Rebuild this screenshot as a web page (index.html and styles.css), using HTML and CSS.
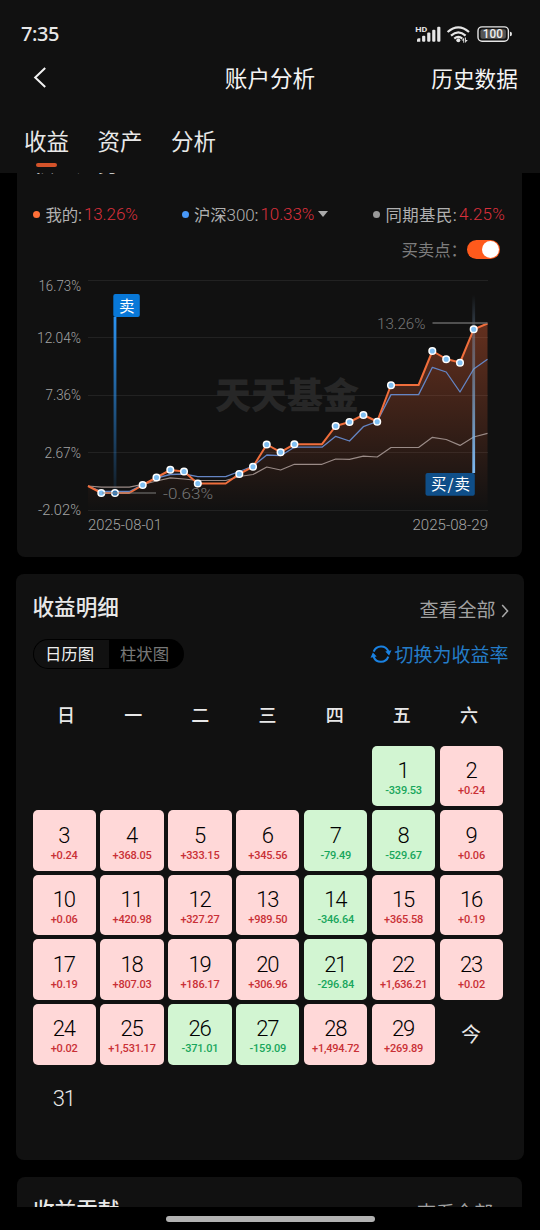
FILE: index.html
```html
<!DOCTYPE html>
<html lang="zh-CN">
<head>
<meta charset="utf-8">
<title>账户分析</title>
<link rel="stylesheet" href="styles.css">
</head>
<body>
<div class="app">
  <header class="header">
    <div class="status">
      <span class="clock">7:35</span>
      <svg class="status-icons" width="98" height="20" viewBox="415 24 98 20">
        <g fill="#e6e6e6">
          <text x="415.2" y="32" class="hd" textLength="12" lengthAdjust="spacingAndGlyphs">HD</text>
          <path d="M417 41.8v-2q0-1.6 1.6-1.6h1.7v3.6z"/>
          <rect x="422.1" y="35.8" width="3.2" height="6" rx="1"/>
          <rect x="427.2" y="32.6" width="3.2" height="9.2" rx="1"/>
          <rect x="432.2" y="29.7" width="3.2" height="12.1" rx="1"/>
          <rect x="437.2" y="26.8" width="3.2" height="15" rx="1"/>
          <circle cx="458.3" cy="40.2" r="2"/>
          <path d="M463.3 42.8v-2.4h-1.7l2.6-3v5.4zM465.1 37.6h.9v2.4h1.8l-2.7 3z"/>
        </g>
        <g fill="none" stroke="#e6e6e6" stroke-width="2.2">
          <path d="M447.6 32q10.7-9.4 21.4 0M451 35.6q7.3-6.4 14.6 0M454.3 38.6q4-3.4 8 0"/>
        </g>
        <rect x="478" y="26.9" width="30.4" height="14.3" rx="4" fill="none" stroke="#e6e6e6" stroke-width="1.4"/>
        <rect x="480.5" y="29.3" width="25.4" height="9.5" rx="2" fill="#555"/>
        <path d="M510 31.8q2 0 2 2.2t-2 2.2z" fill="#e6e6e6"/>
        <text x="482.8" y="38.3" class="battery" textLength="20" lengthAdjust="spacingAndGlyphs">100</text>
      </svg>
    </div>
    <div class="nav">
      <svg class="back" width="14" height="22" viewBox="0 0 14 22"><path d="M12.2 2.1L2.2 11.5l10 9.4" fill="none" stroke="#f2f2f2" stroke-width="2"/></svg>
      <h1 class="nav-title">账户分析</h1>
      <span class="nav-action">历史数据</span>
    </div>
    <nav class="tabs">
      <span class="tab active">收益</span><span class="tab">资产</span><span class="tab">分析</span>
    </nav>
  </header>

  <main class="scroll">
    <section class="card trend">
      <h2 class="card-title">权益走势</h2>
      <div class="legend">
        <div class="legend-item"><i class="dot orange"></i><span>我的:</span><b>13.26%</b></div>
        <div class="legend-item"><i class="dot blue"></i><span>沪深<em>300</em>:</span><b>10.33%</b><i class="caret"></i></div>
        <div class="legend-item"><i class="dot gray"></i><span>同期基民:</span><b>4.25%</b></div>
      </div>
      <div class="toggle-row"><span>买卖点：</span><i class="switch"></i></div>
      <svg class="chart" width="505" height="291" viewBox="17 266 505 291">
        <defs>
          <linearGradient id="area" x1="0" y1="323" x2="0" y2="510" gradientUnits="userSpaceOnUse">
            <stop offset="0" stop-color="#ff6a38" stop-opacity=".35"/>
            <stop offset="1" stop-color="#ff6a38" stop-opacity="0"/>
          </linearGradient>
          <linearGradient id="sell" x1="0" y1="317" x2="0" y2="490" gradientUnits="userSpaceOnUse">
            <stop offset="0" stop-color="#2b93f2"/>
            <stop offset="1" stop-color="#2b93f2" stop-opacity=".1"/>
          </linearGradient>
          <linearGradient id="buy" x1="0" y1="295" x2="0" y2="473" gradientUnits="userSpaceOnUse">
            <stop offset="0" stop-color="#7faede" stop-opacity="0"/>
            <stop offset=".2" stop-color="#7f9fc0" stop-opacity=".35"/>
            <stop offset="1" stop-color="#7db9f2"/>
          </linearGradient>
        </defs>
        <path d="M88 280.5H488M88 337.5H488M88 395.5H488M88 452.5H488M88 510.5H488" stroke="#222" fill="none"/>
        <text class="watermark" x="215" y="409" textLength="144" lengthAdjust="spacingAndGlyphs">天天基金</text>
        <g class="axis">
          <text x="38.5" y="291" textLength="42.5" lengthAdjust="spacingAndGlyphs">16.73%</text>
          <text x="37" y="342.5" textLength="44" lengthAdjust="spacingAndGlyphs">12.04%</text>
          <text x="45.5" y="400" textLength="35.5" lengthAdjust="spacingAndGlyphs">7.36%</text>
          <text x="44.5" y="457.5" textLength="36.5" lengthAdjust="spacingAndGlyphs">2.67%</text>
          <text x="38" y="515" textLength="43" lengthAdjust="spacingAndGlyphs">-2.02%</text>
          <text x="88" y="530" textLength="74" lengthAdjust="spacingAndGlyphs">2025-08-01</text>
          <text x="412.5" y="530" textLength="75.5" lengthAdjust="spacingAndGlyphs">2025-08-29</text>
        </g>
        <path fill="url(#area)" d="M88 486L101.5 493H129.3L142.8 485 156.5 477.5 170.3 470 184 471.5 197.8 483.5H225.7L239.3 474 253 466.7 266.8 444.5 280.6 452.2 294.4 444.2H322L335.7 426 349.5 422 363.3 415 377.2 421.5 391 385H418.6L432.4 351 446.2 359 460 362.5 473.7 329.3 487.5 323.5V510H88z"/>
        <rect x="113.6" y="317" width="2.8" height="173" fill="url(#sell)"/>
        <path class="line" stroke="#9a8b87" stroke-width="1.2" d="M88 486L101.5 487.2H129.3L142.8 484.3 156.5 481 170.3 477.8 184 479 197.8 480.5H225.7L239.3 476.5 253 474.5 266.8 467 280.6 470 294.4 464.3H322L335.7 459 349.5 459.3 363.3 456.2 377.2 457 391 447.5H418.6L432.4 437.3 446.2 439.5 460 445.4 473.7 437 487.5 433.3"/>
        <path class="line" stroke="#6485c4" stroke-width="1.3" d="M88 486L101.5 491.5H129.3L142.8 484.5 156.5 478 170.3 474.5 184 474 197.8 476.7H225.7L239.3 471.5 253 466 266.8 455 280.6 455.7 294.4 447.2H322L335.7 436.3 349.5 441 363.3 426.7 377.2 421.5 391 394.6H418.6L432.4 367.3 446.2 372 460 392 473.7 369 487.5 359.2"/>
        <path class="line" stroke="#f06e3c" stroke-width="2" d="M88 486L101.5 493H129.3L142.8 485 156.5 477.5 170.3 470 184 471.5 197.8 483.5H225.7L239.3 474 253 466.7 266.8 444.5 280.6 452.2 294.4 444.2H322L335.7 426 349.5 422 363.3 415 377.2 421.5 391 385H418.6L432.4 351 446.2 359 460 362.5 473.7 329.3 487.5 323.5"/>
        <rect x="472.3" y="295" width="2.8" height="178" fill="url(#buy)"/>
        <g fill="#80bff2" stroke="#fff" stroke-width="1.5">
          <circle cx="101.3" cy="493" r="3.3"/><circle cx="115" cy="493" r="3.3" fill="#2f75b5"/><circle cx="142.7" cy="485" r="3.3"/><circle cx="156.5" cy="477.5" r="3.3"/><circle cx="170.3" cy="469.8" r="3.3"/><circle cx="184" cy="471.5" r="3.3"/><circle cx="197.8" cy="483.5" r="3.3"/><circle cx="239.3" cy="474" r="3.3"/><circle cx="253" cy="466.7" r="3.3"/><circle cx="266.7" cy="444.5" r="3.3"/><circle cx="280.6" cy="452.3" r="3.3"/><circle cx="294.4" cy="444.2" r="3.3"/><circle cx="335.7" cy="426" r="3.3"/><circle cx="349.5" cy="422" r="3.3"/><circle cx="363.4" cy="415" r="3.3"/><circle cx="377.2" cy="421.7" r="3.3"/><circle cx="391" cy="385.2" r="3.3"/><circle cx="432.3" cy="351" r="3.3"/><circle cx="446.2" cy="359.2" r="3.3"/><circle cx="460" cy="362.8" r="3.3"/><circle cx="473.7" cy="329.3" r="3.3"/>
        </g>
        <path d="M102 493H156" stroke="#888" stroke-opacity=".6" stroke-width="1.5"/>
        <path d="M432.5 323H487.5" stroke="#666" stroke-width="1.5"/>
        <g class="extreme">
          <text x="377" y="329" textLength="48.5" lengthAdjust="spacingAndGlyphs">13.26%</text>
          <text x="163" y="499" textLength="50" lengthAdjust="spacingAndGlyphs">-0.63%</text>
        </g>
        <rect x="113.3" y="294" width="26.5" height="23" rx="2" fill="#0878d8"/>
        <text class="flag" x="119" y="311.8">卖</text>
        <rect x="425.5" y="473" width="49.3" height="22.7" rx="2" fill="#0f4e88"/>
        <text class="flag" x="431" y="490.3" textLength="39">买/卖</text>
      </svg>
    </section>

    <section class="card detail">
      <div class="detail-head">
        <h2 class="card-title">收益明细</h2>
        <span class="more">查看全部<svg width="8" height="14" viewBox="0 0 8 14"><path d="M1.2 1L6.6 7 1.2 13" fill="none" stroke="#aaa" stroke-width="1.5"/></svg></span>
      </div>
      <div class="detail-tools">
        <div class="segment"><span class="on">日历图</span><span>柱状图</span></div>
        <span class="switch-rate"><svg width="22" height="22" viewBox="0 0 22 22"><g fill="none" stroke="#1a82e2" stroke-width="2.1"><path d="M3.7 8.6A7.9 7.9 0 0 1 18.4 8.4"/><path d="M18.3 13.6A7.9 7.9 0 0 1 3.6 13.8"/></g><path fill="#1a82e2" d="M15.3 8.6l6.2-1.4-2.4 5.4zM6.7 13.4l-6.2 1.4 2.4-5.4z"/></svg><span>切换为收益率</span></span>
      </div>
      <div class="week"><span>日</span><span>一</span><span>二</span><span>三</span><span>四</span><span>五</span><span>六</span></div>
      <div class="calendar">
        <div class="day down first"><b>1</b><small>-339.53</small></div>
        <div class="day up"><b>2</b><small>+0.24</small></div>
        <div class="day up"><b>3</b><small>+0.24</small></div>
        <div class="day up"><b>4</b><small>+368.05</small></div>
        <div class="day up"><b>5</b><small>+333.15</small></div>
        <div class="day up"><b>6</b><small>+345.56</small></div>
        <div class="day down"><b>7</b><small>-79.49</small></div>
        <div class="day down"><b>8</b><small>-529.67</small></div>
        <div class="day up"><b>9</b><small>+0.06</small></div>
        <div class="day up"><b>10</b><small>+0.06</small></div>
        <div class="day up"><b>11</b><small>+420.98</small></div>
        <div class="day up"><b>12</b><small>+327.27</small></div>
        <div class="day up"><b>13</b><small>+989.50</small></div>
        <div class="day down"><b>14</b><small>-346.64</small></div>
        <div class="day up"><b>15</b><small>+365.58</small></div>
        <div class="day up"><b>16</b><small>+0.19</small></div>
        <div class="day up"><b>17</b><small>+0.19</small></div>
        <div class="day up"><b>18</b><small>+807.03</small></div>
        <div class="day up"><b>19</b><small>+186.17</small></div>
        <div class="day up"><b>20</b><small>+306.96</small></div>
        <div class="day down"><b>21</b><small>-296.84</small></div>
        <div class="day up"><b>22</b><small>+1,636.21</small></div>
        <div class="day up"><b>23</b><small>+0.02</small></div>
        <div class="day up"><b>24</b><small>+0.02</small></div>
        <div class="day up"><b>25</b><small>+1,531.17</small></div>
        <div class="day down"><b>26</b><small>-371.01</small></div>
        <div class="day down"><b>27</b><small>-159.09</small></div>
        <div class="day up"><b>28</b><small>+1,494.72</small></div>
        <div class="day up"><b>29</b><small>+269.89</small></div>
        <div class="day plain today"><b>今</b></div>
        <div class="day plain"><b>31</b></div>
      </div>
    </section>

    <section class="card contrib">
      <h2 class="card-title">收益贡献</h2>
      <span class="more">查看全部<svg width="8" height="14" viewBox="0 0 8 14"><path d="M1.2 1L6.6 7 1.2 13" fill="none" stroke="#aaa" stroke-width="1.5"/></svg></span>
    </section>
  </main>
  <footer class="home"><i></i></footer>
</div>
</body>
</html>
```
FILE: styles.css
```css
* { box-sizing: border-box; margin: 0; padding: 0; }
body {
  background: #000;
  color: #e8e8e8;
  font-family: Roboto, "Noto Sans CJK SC", sans-serif;
}
i, em { font-style: normal; }
.app { width: 540px; height: 1230px; display: flex; flex-direction: column; overflow: hidden; }

.header { height: 173px; flex: none; background: #111; padding-top: 20px; }
.status { height: 28px; padding: 0 27px 0 21px; display: flex; align-items: center; justify-content: space-between; }
.clock { font: 500 20px/28px "Noto Sans", sans-serif; letter-spacing: -.4px; }
.hd { font: 700 8px Roboto, sans-serif; }
.battery { font: 500 12px Roboto, sans-serif; fill: #eee; }
.nav { height: 58px; display: grid; grid-template-columns: 1fr auto 1fr; align-items: center; padding: 0 22px 0 33px; }
.nav-title { font-size: 22.6px; font-weight: 400; color: #f4f4f4; padding-right: 11px; }
.nav-action { font-size: 21.7px; color: #f4f4f4; justify-self: end; }
.tabs { display: flex; gap: 28.5px; padding: 18px 0 0 24px; }
.tab { height: 44px; font-size: 22.5px; line-height: 36px; display: flex; flex-direction: column; align-items: center; }
.tab.active::after { content: ""; width: 21px; height: 4.4px; border-radius: 2.2px; background: #d4532a; margin-top: 3px; }

.scroll { flex: 1; min-height: 0; overflow: hidden; display: flex; flex-direction: column; align-items: flex-start; gap: 17px; padding-left: 17px; }
.card { background: #111; border-radius: 8px; flex: none; }
.card-title { font-size: 21.6px; font-weight: 500; line-height: 32px; }
.trend { width: 505px; height: 412px; margin-top: -28px; }
.trend .card-title { padding: 3px 0 0 16px; height: 51px; }
.legend { height: 36px; padding: 0 17px 0 16px; display: flex; justify-content: space-between; align-items: center; font-size: 16.4px; color: #b0b0b0; }
.legend-item { display: flex; align-items: center; }
.legend-item span { letter-spacing: -.1px; }
.legend-item b { font-weight: 300; font-size: 17px; color: #d9303c; margin-left: 2px; letter-spacing: -.1px; }
.legend-item:first-child { margin-right: 3px; }
.legend-item:nth-child(2) { margin-right: 4px; }
.legend-item:last-child span { letter-spacing: .4px; }
.legend-item:last-child b { letter-spacing: .2px; }
.legend em { font-weight: 300; font-size: 17px; }
.dot { width: 7px; height: 7px; border-radius: 50%; margin-right: 5.5px; }
.orange { background: #ff7038; }
.blue { background: #4898f8; }
.gray { background: #999; }
.caret { border: 5px solid transparent; border-top: 6px solid #aaa; border-bottom: 0; margin-left: 4px; }
.toggle-row { height: 34px; display: flex; align-items: center; justify-content: flex-end; padding-right: 22px; color: #7e7e7e; font-size: 16.4px; }
.switch { width: 33px; height: 19px; border-radius: 10px; background: #ff5a1c; display: flex; justify-content: flex-end; padding: 1px; }
.switch::after { content: ""; width: 17px; height: 17px; border-radius: 50%; background: #fff; }
.chart { display: block; }
.axis { font: 300 14.5px Roboto, sans-serif; fill: #a4a4a4; }
.extreme { font: 300 15.5px Roboto, sans-serif; fill: #777; }
.watermark { font: 900 36px "Noto Sans CJK SC", sans-serif; fill: #272727; }
.line { fill: none; stroke-linejoin: round; }
.flag { font: 400 15.5px "Noto Sans CJK SC", sans-serif; fill: #fff; }

.detail { width: 508px; height: 586px; margin-left: -1.5px; padding: 18px 15px 0 17px; }
.detail-head { display: flex; justify-content: space-between; height: 32px; }
.more { display: flex; align-items: center; gap: 5px; font-size: 19px; line-height: 32px; color: #a2a2a2; padding-top: 2px; height: 36px; }
.detail-tools { height: 30px; margin-top: 15px; display: flex; justify-content: space-between; align-items: center; }
.segment { width: 151px; height: 30px; border-radius: 15px; background: #000; padding: 1px; display: flex; overflow: hidden; font-size: 16.4px; line-height: 29px; color: #777; text-align: center; }
.segment span { flex: 1; padding-right: 2px; }
.segment .on { background: #111; color: #eee; border-radius: 14px 0 0 14px; padding-right: 3px; }
.switch-rate { display: flex; align-items: center; gap: 2px; font-size: 19px; line-height: 26px; color: #247cc8; height: 28px; }
.switch-rate span { padding-top: 3px; }
.week { width: 470px; margin-top: 33px; display: flex; height: 28px; font-size: 18px; font-weight: 500; line-height: 28px; text-align: center; }
.week span { flex: 1; }
.calendar { margin-top: 15.6px; width: 471px; display: grid; grid-template-columns: repeat(7, 63.3px); grid-auto-rows: 60.7px; gap: 3.9px 4.6px; }
.day { border-radius: 5px; display: flex; flex-direction: column; align-items: center; padding-top: 12.4px; color: #000; }
.day b { font-size: 22px; font-weight: 300; line-height: 26px; letter-spacing: -1.2px; padding-right: 1px; }
.day small { font-size: 11px; font-weight: 500; line-height: 14px; letter-spacing: -.2px; }
.first { grid-column-start: 6; }
.up { background: #ffd8d8; }
.up small { color: #c93036; }
.down { background: #d2f5d2; }
.down small { color: #18a65c; }
.plain { color: #e8e8e8; padding-top: 18px; }
.today b { font-size: 20px; font-weight: 400; letter-spacing: 0; }
.contrib { width: 505px; height: 80px; padding: 18px 16px 0 16px; display: flex; justify-content: space-between; align-items: flex-start; }

.home { height: 23.4px; flex: none; background: #000; display: flex; justify-content: center; padding-top: 9.4px; }
.home i { width: 209px; height: 5.6px; border-radius: 3px; background: #b2b2b2; }
```
